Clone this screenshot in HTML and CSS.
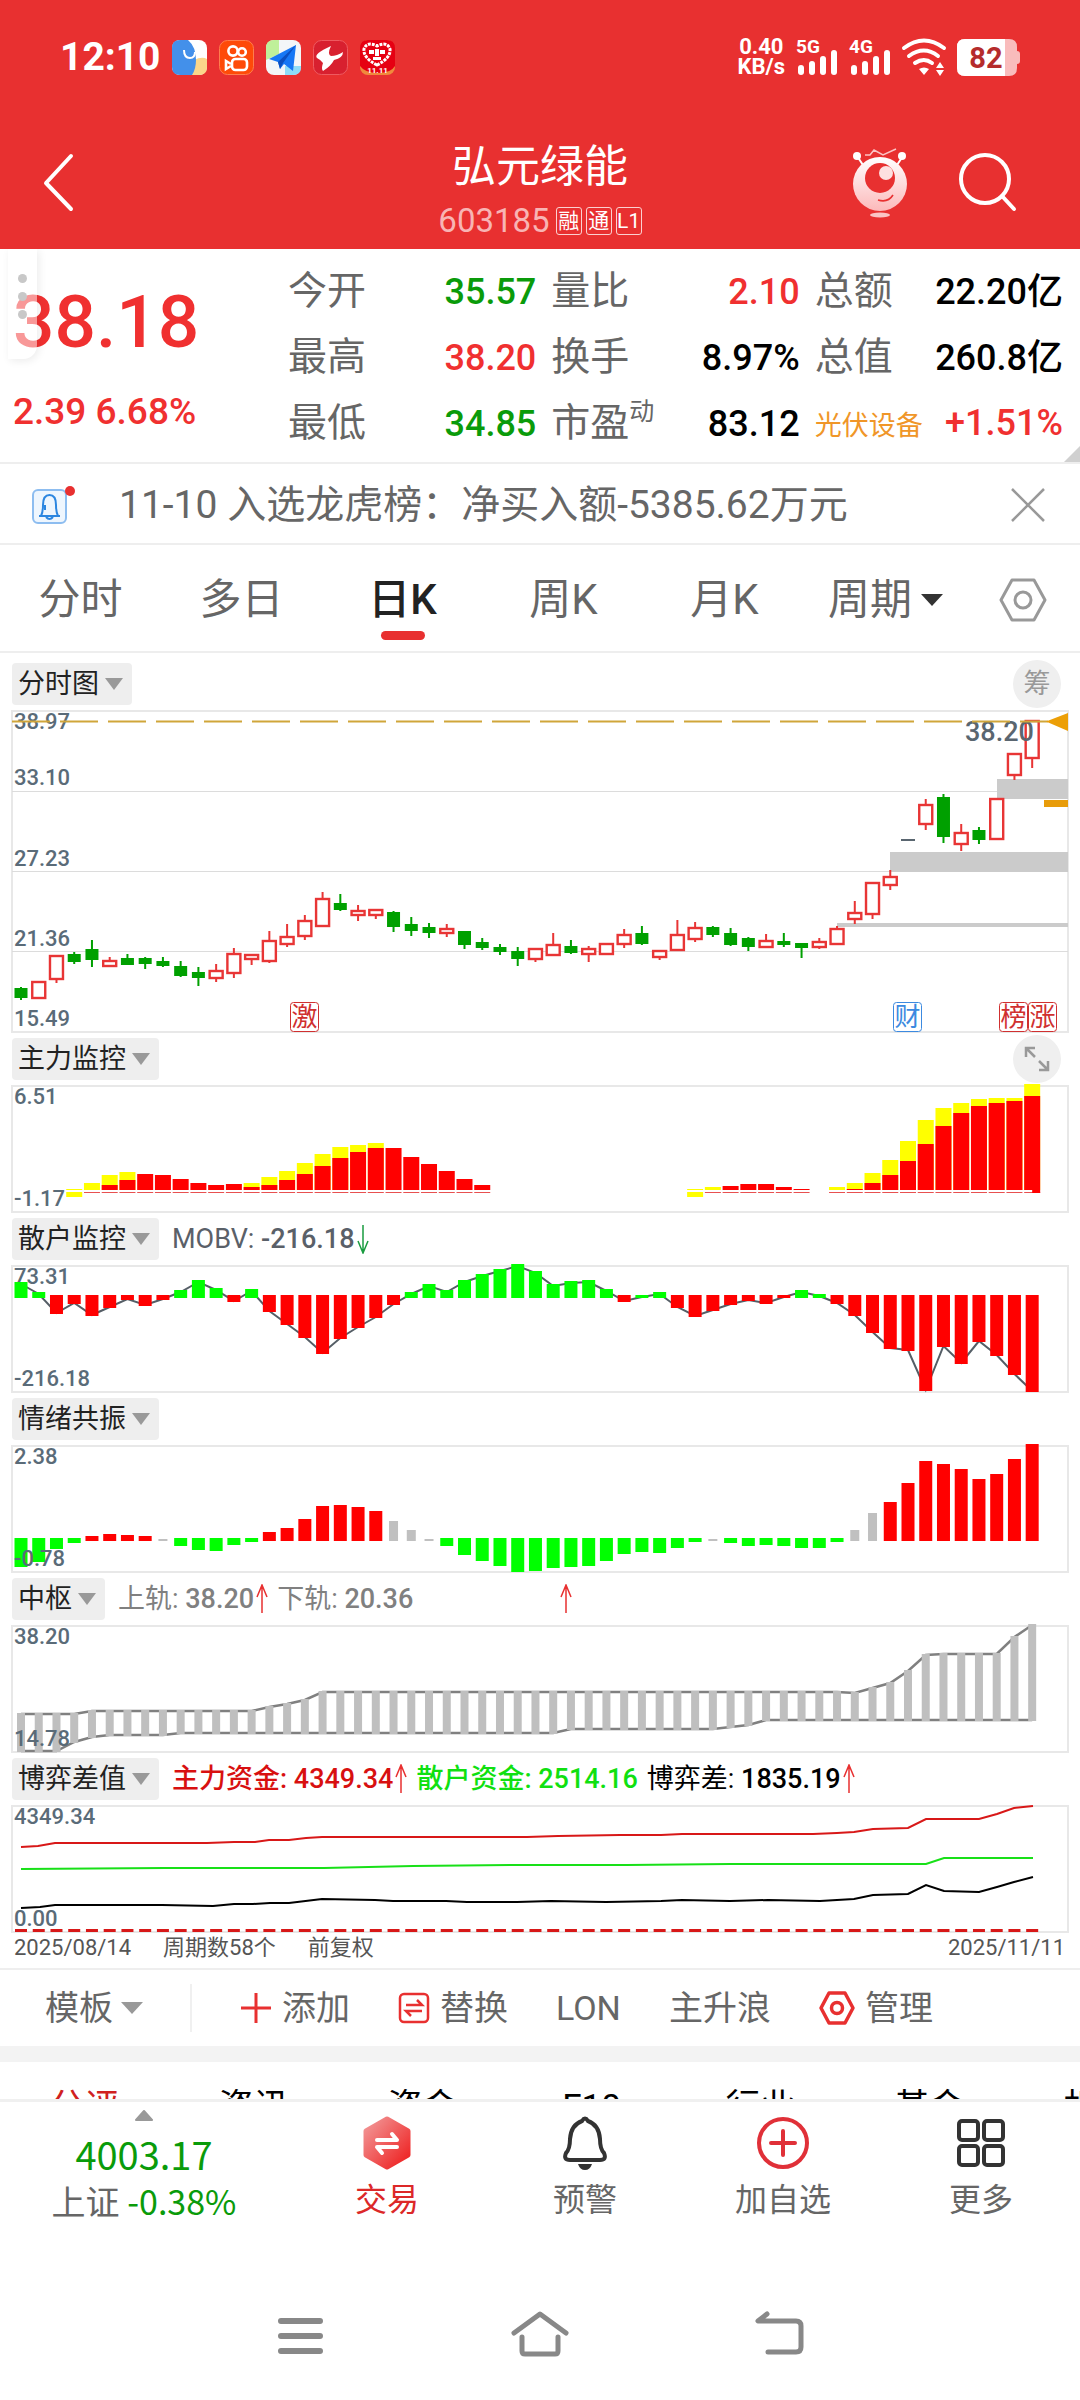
FILE: index.html
```html
<!DOCTYPE html>
<html lang="zh-CN">
<head>
  <meta charset="UTF-8">
  <meta name="viewport" content="width=device-width, initial-scale=1.0">
  <title>弘元绿能 603185</title>
  <link rel="stylesheet" href="styles.css">
</head>
<body>
  <div class="top">
    <div class="status">
      <span class="clock">12:10</span>
      <div class="apps">
        <svg width="35" height="35" viewBox="0 0 35 35"><rect width="35" height="35" rx="8" fill="#fff"/><path d="M22 20q8-4 13-1v8q0 8-8 8h-8z" fill="#fbd68a"/><path d="M8 0h8q8 7 8 20 0 9-4 15H8q-8 0-8-8V8q0-8 8-8z" fill="#4390ea"/><path d="M12 10q0 8 6 8 5 0 5-6" fill="none" stroke="#fff" stroke-width="2"/></svg>
        <svg width="35" height="35" viewBox="0 0 35 35"><rect x=".5" y=".5" width="34" height="34" rx="8" fill="#fe4a08" stroke="#ff7d4d"/><g fill="none" stroke="#fff" stroke-width="2.6"><circle cx="14" cy="11" r="4.6"/><circle cx="23" cy="12" r="3.8"/><rect x="13" y="19" width="15" height="11" rx="3.5"/><path d="M12 24l-5-3v8l5-3"/></g></svg>
        <svg width="35" height="35" viewBox="0 0 35 35"><rect width="35" height="35" rx="8" fill="#f3f6f8"/><path d="M8 0h5v14L0 20V8q0-8 8-8z" fill="#bff09a"/><path d="M19 26h16v1q0 8-8 8h-8z" fill="#8edcf8"/><path d="M30 5L3 19l9 3 2 7 4-5 9 7z" fill="#1677f5"/><path d="M30 5L12 22l2 7 3-6z" fill="#0b4fc0"/></svg>
        <svg width="35" height="35" viewBox="0 0 35 35"><rect x=".5" y=".5" width="34" height="34" rx="8" fill="#d8202f" stroke="#ee5a60"/><path d="M18 6Q0 14 4 18q4 2 6 5-2 6 0 8 8-5 11-11Q30 18 30 12q-6 4-12 4-4-2 0-10z" fill="#fff"/></svg>
        <svg width="35" height="35" viewBox="0 0 35 35"><rect width="35" height="35" rx="8" fill="#f08a3c"/><path d="M8 0h19q8 0 8 8v18q-4 7-17 7T0 26V8q0-8 8-8z" fill="#e60012"/><path d="M17 25Q3 18 4 9q3-8 13-3 10-5 13 3 1 9-13 16z" fill="none" stroke="#fff" stroke-width="3" stroke-dasharray="3 1"/><path d="M9 10h5v4H9zM20 10h5v4h-5zM15 9h4v7h-4zM13 17h8v3h-8z" fill="#fff"/><text x="17.5" y="33" class="app-date">11.11</text></svg>
      </div>
      <div class="speed"><span>0.40</span><span>KB/s</span></div>
      <svg width="42" height="38" viewBox="0 0 42 38" fill="#fff"><text x="0" y="15" class="net">5G</text><rect x="2" y="27" width="6" height="10" rx="3"/><rect x="13" y="23" width="6" height="14" rx="3"/><rect x="24" y="18" width="6" height="19" rx="3"/><rect x="35" y="12" width="6" height="25" rx="3"/></svg>
      <svg width="42" height="38" viewBox="0 0 42 38" fill="#fff"><text x="0" y="15" class="net">4G</text><rect x="2" y="27" width="6" height="10" rx="3"/><rect x="13" y="23" width="6" height="14" rx="3"/><rect x="24" y="18" width="6" height="19" rx="3"/><rect x="35" y="12" width="6" height="25" rx="3"/></svg>
      <svg width="44" height="38" viewBox="0 0 44 38"><g fill="none" stroke="#fff" stroke-width="4" stroke-linecap="round"><path d="M2 10q20-15 40 0"/><path d="M7 18q15-11 29 0"/><path d="M13 25q9-6 17 0"/></g><path d="M17 31q5-3 10 0l-5 6zM34 30l4-6 4 6zM34 32h8l-4 6z" fill="#fff"/></svg>
      <svg width="63" height="37" viewBox="0 0 63 37"><path d="M8 0h44q8 0 8 8v4q3 0 3 3v7q0 3-3 3v4q0 8-8 8H8q-8 0-8-8V8q0-8 8-8z" fill="#f9bcbc"/><path d="M8 0h40v37H8q-8 0-8-8V8q0-8 8-8z" fill="#fff"/><text x="29" y="29" class="battery">82</text></svg>
    </div>
    <header class="header">
      <button class="icon-btn back" aria-label="返回"><svg width="32" height="60" viewBox="0 0 32 60"><path d="M29 4L4 31l25 26" fill="none" stroke="#fff" stroke-width="4" stroke-linecap="round" stroke-linejoin="round"/></svg></button>
      <div class="title">
        <h1>弘元绿能</h1>
        <p><span class="code">603185</span><i>融</i><i>通</i><i>L1</i></p>
      </div>
      <div class="header-actions">
        <button class="icon-btn" aria-label="助手"><svg width="56" height="72" viewBox="0 0 56 72">
          <defs><linearGradient id="ball" x1="0" y1="0" x2="0" y2="1"><stop offset="0" stop-color="#fff"/><stop offset="1" stop-color="#fcb9ba"/></linearGradient></defs>
          <path d="M5 10l6 9M51 10l-6 9" stroke="#fff" stroke-width="2"/><circle cx="5" cy="10" r="4" fill="#fff"/><circle cx="50" cy="10" r="4" fill="#fff"/>
          <path d="M13 9h5l4-5 9 5 13-6" fill="none" stroke="#fbc4c4" stroke-width="1.5"/>
          <circle cx="28" cy="38" r="27" fill="url(#ball)"/><circle cx="28" cy="32" r="15" fill="#e83030"/><circle cx="34" cy="27" r="7" fill="#fde0e0"/>
          <path d="M26 54q10 3 15-5" fill="none" stroke="#e83030" stroke-width="1.6"/><ellipse cx="28" cy="69" rx="10" ry="2.5" fill="#fbc4c4"/></svg></button>
        <button class="icon-btn" aria-label="搜索"><svg width="58" height="60" viewBox="0 0 58 60" fill="none" stroke="#fff" stroke-width="4" stroke-linecap="round"><circle cx="26" cy="27" r="24"/><path d="M43 44l12 13"/></svg></button>
      </div>
    </header>
  </div>

  <main class="main">
    <section class="quote">
      <div class="float-handle"><b></b><b></b><b></b></div>
      <div class="price">
        <strong>38.18</strong>
        <span>2.39 6.68%</span>
      </div>
      <dl class="stats">
        <div><dt>今开</dt><dd class="green">35.57</dd></div>
        <div><dt>量比</dt><dd class="red">2.10</dd></div>
        <div><dt>总额</dt><dd>22.20亿</dd></div>
        <div><dt>最高</dt><dd class="red">38.20</dd></div>
        <div><dt>换手</dt><dd>8.97%</dd></div>
        <div><dt>总值</dt><dd>260.8亿</dd></div>
        <div><dt>最低</dt><dd class="green">34.85</dd></div>
        <div><dt>市盈<sup>动</sup></dt><dd>83.12</dd></div>
        <div><dt class="sector">光伏设备</dt><dd class="red">+1.51%</dd></div>
      </dl>
    </section>

    <section class="news">
      <svg width="44" height="40" viewBox="0 0 44 40"><rect x="1" y="5" width="33" height="33" rx="5" fill="#eef6fe" stroke="#8dbdf0" stroke-width="2"/><path d="M7 31h21M9 31q2-4 2-11 0-10 6.500-10T24 20q0 7 2 11M14 32q3.500 4 7 0M13 20v5" fill="none" stroke="#2c86e0" stroke-width="2"/><circle cx="38" cy="6" r="5" fill="#e83030"/></svg>
      <a href="#news">11-10 入选龙虎榜：净买入额-5385.62万元</a>
      <button class="icon-btn" aria-label="关闭"><svg width="36" height="36" viewBox="0 0 36 36"><path d="M2 2l32 32M34 2L2 34" stroke="#999" stroke-width="2.500"/></svg></button>
    </section>

    <nav class="periods">
      <button>分时</button>
      <button>多日</button>
      <button class="active">日K</button>
      <button>周K</button>
      <button>月K</button>
      <label class="picker"><select aria-label="周期"><option>周期</option></select></label>
      <button class="icon-btn" aria-label="设置"><svg width="50" height="46" viewBox="0 0 50 46" fill="none" stroke="#999" stroke-width="3" stroke-linejoin="round"><path d="M14 3h22l11 20-11 20H14L3 23z"/><circle cx="25" cy="23" r="8"/></svg></button>
    </nav>

    <section class="charts">
      <div class="panel">
        <div class="panel-head">
          <label class="picker tag"><select aria-label="主图"><option>分时图</option></select></label>
          <button class="round">筹</button>
        </div>
        <svg id="kline" viewBox="0 0 1056 321"></svg>
      </div>
      <div class="panel">
        <div class="panel-head">
          <label class="picker tag"><select aria-label="副图一"><option>主力监控</option></select></label>
          <button class="round" aria-label="全屏"><svg width="26" height="26" viewBox="0 0 26 26" fill="none" stroke="#999" stroke-width="2.500"><path d="M2 11V2h9M2 2l9 9M24 15v9h-9M24 24l-9-9"/></svg></button>
        </div>
        <svg id="mainforce" viewBox="0 0 1056 126"></svg>
      </div>
      <div class="panel">
        <div class="panel-head">
          <label class="picker tag"><select aria-label="副图二"><option>散户监控</option></select></label>
          <span class="slate">MOBV: <b>-216.18</b></span><svg class="arrow down"><use href="#arrow"/></svg>
        </div>
        <svg id="retail" viewBox="0 0 1056 126"></svg>
      </div>
      <div class="panel">
        <div class="panel-head">
          <label class="picker tag"><select aria-label="副图三"><option>情绪共振</option></select></label>
        </div>
        <svg id="mood" viewBox="0 0 1056 126"></svg>
      </div>
      <div class="panel">
        <div class="panel-head">
          <label class="picker tag"><select aria-label="副图四"><option>中枢</option></select></label>
          <span class="gray">上轨: <b>38.20</b></span><svg class="arrow"><use href="#arrow"/></svg>
          <span class="gray next">下轨: <b>20.36</b></span><svg class="arrow apart"><use href="#arrow"/></svg>
        </div>
        <svg id="pivot" viewBox="0 0 1056 126"></svg>
      </div>
      <div class="panel">
        <div class="panel-head">
          <label class="picker tag"><select aria-label="副图五"><option>博弈差值</option></select></label>
          <span class="main-fund">主力资金: 4349.34</span><svg class="arrow"><use href="#arrow"/></svg>
          <span class="retail-fund next">散户资金: 2514.16</span>
          <span class="diff next">博弈差: <b>1835.19</b></span><svg class="arrow"><use href="#arrow"/></svg>
        </div>
        <svg id="game" viewBox="0 0 1056 126"></svg>
      </div>
      <div class="dates"><span>2025/08/14</span><span>周期数58个</span><span>前复权</span><span>2025/11/11</span></div>
    </section>

    <div class="tools">
      <label class="picker"><select aria-label="模板"><option>模板</option></select></label>
      <button><svg width="32" height="32" viewBox="0 0 32 32" stroke="#e83030" stroke-width="3"><path d="M16 1v30M1 16h30"/></svg>添加</button>
      <button><svg width="32" height="32" viewBox="0 0 32 32" fill="none" stroke="#e83030" stroke-width="2.500"><rect x="2" y="2" width="28" height="28" rx="4"/><path d="M8 13h16l-5-5M24 19H8l5 5"/></svg>替换</button>
      <button>LON</button>
      <button>主升浪</button>
      <button><svg width="36" height="36" viewBox="0 0 36 36" fill="none" stroke="#e83030" stroke-width="3.500" stroke-linejoin="round"><path d="M10 3h16l8 15-8 15H10L2 18z"/><circle cx="18" cy="18" r="5.500"/></svg>管理</button>
    </div>

    <nav class="sections">
      <a href="#s1" class="active">分评</a>
      <a href="#s2">资讯</a>
      <a href="#s3">资金</a>
      <a href="#s4">F10</a>
      <a href="#s5">行业</a>
      <a href="#s6">基金</a>
      <a href="#s7">相关</a>
    </nav>
  </main>

  <footer>
    <div class="dock">
      <a href="#index" class="index">
        <svg width="20" height="11" viewBox="0 0 20 11"><path d="M10 1l8 9H2z" fill="#999" stroke="#999" stroke-width="2" stroke-linejoin="round"/></svg>
        <span class="index-value">4003.17</span>
        <span class="index-change">上证 <b>-0.38%</b></span>
      </a>
      <button class="trade"><svg width="54" height="54" viewBox="0 0 54 54">
        <defs><linearGradient id="hex" x1="0" y1="0" x2="1" y2="1"><stop offset="0" stop-color="#f29a9a"/><stop offset="1" stop-color="#ee1c1c"/></linearGradient></defs>
        <path d="M27 3l21 12v24L27 51 6 39V15z" fill="url(#hex)" stroke="url(#hex)" stroke-width="5" stroke-linejoin="round"/>
        <path d="M17 24h20l-5-6M37 31H17l5 6" fill="none" stroke="#fff" stroke-width="4" stroke-linecap="round" stroke-linejoin="round"/></svg>交易</button>
      <button><svg width="54" height="54" viewBox="0 0 54 54"><path d="M24 5q3-5 6 0 11 4 12 18 0 10 4 14 3 7-4 7H12q-7 0-4-7 4-4 4-14Q13 9 24 5z" fill="none" stroke="#333" stroke-width="4"/><path d="M20 48h14q-2 6-7 6t-7-6z" fill="#333"/></svg>预警</button>
      <button><svg width="54" height="54" viewBox="0 0 54 54" fill="none" stroke="#e03038" stroke-width="4" stroke-linecap="round"><circle cx="27" cy="27" r="24"/><path d="M27 15v24M15 27h24"/></svg>加自选</button>
      <button><svg width="54" height="54" viewBox="0 0 54 54" fill="none" stroke="#333" stroke-width="4"><rect x="5" y="5" width="19" height="19" rx="3"/><rect x="30" y="5" width="19" height="19" rx="3"/><rect x="5" y="30" width="19" height="19" rx="3"/><rect x="30" y="30" width="19" height="19" rx="3"/></svg>更多</button>
    </div>
    <div class="sysnav">
      <button class="icon-btn" aria-label="菜单"><svg width="60" height="50" viewBox="0 0 60 50" stroke="#888" stroke-width="6" stroke-linecap="round"><path d="M11 13h39M11 28h39M11 43h39"/></svg></button>
      <button class="icon-btn" aria-label="主页"><svg width="60" height="50" viewBox="0 0 60 50" fill="none" stroke="#888" stroke-width="5" stroke-linecap="round" stroke-linejoin="round"><path d="M4 25L30 6l26 19"/><path d="M12 29v14q0 3 3 3h30q3 0 3-3V29"/></svg></button>
      <button class="icon-btn" aria-label="后退"><svg width="60" height="50" viewBox="0 0 60 50" fill="none" stroke="#888" stroke-width="5" stroke-linecap="round" stroke-linejoin="round"><path d="M17 6l-9 7h38q5 0 5 5v21q0 5-5 5H18"/></svg></button>
    </div>
  </footer>

  <svg class="defs"><symbol id="arrow" viewBox="0 0 12 30"><path d="M6 29V2M1 13L6 1l5 12" fill="none" stroke="currentColor" stroke-width="1.500"/></symbol></svg>
  <script src="charts.js"></script>
</body>
</html>
```
FILE: styles.css
```css
* {
  box-sizing: border-box;
}

body {
  margin: 0;
  height: 100vh;
  display: flex;
  flex-direction: column;
  background: #fff;
  color: #666;
  font-family: Roboto, "Noto Sans CJK SC", sans-serif;
}

h1, p, dl, dd {
  margin: 0;
}

a {
  color: inherit;
  text-decoration: none;
}

button, select {
  margin: 0;
  padding: 0;
  border: 0;
  background: none;
  color: inherit;
  font: inherit;
  line-height: inherit;
  cursor: pointer;
}

svg {
  display: block;
  flex: none;
}

.icon-btn {
  display: flex;
  justify-content: center;
}

.defs {
  position: absolute;
  width: 0;
  height: 0;
}

.red { color: #f03030; }
.green { color: #0a9b0a; }

/* status bar and title */
.top {
  background: #e83030;
  color: #fff;
}

.status {
  display: flex;
  align-items: center;
  gap: 11px;
  height: 114px;
  padding: 0 60px;
}

.status svg {
  overflow: visible;
}

.clock {
  font-size: 39px;
  font-weight: 700;
}

.apps {
  display: flex;
  gap: 12px;
  margin-right: auto;
}

.app-date {
  fill: #fff;
  font-size: 8px;
  font-weight: 700;
  text-anchor: middle;
}

.speed {
  display: flex;
  flex-direction: column;
  align-items: center;
  font-size: 22px;
  font-weight: 700;
  line-height: 20px;
}

.net {
  font-size: 19px;
  font-weight: 700;
}

.battery {
  fill: #b52c2c;
  font-size: 29px;
  font-weight: 700;
  text-anchor: middle;
}

.header {
  display: grid;
  grid-template-columns: 1fr auto 1fr;
  align-items: center;
  padding: 14px 42px 13px;
}

.back {
  justify-self: start;
}

.title {
  padding-top: 12px;
  text-align: center;
}

.title h1 {
  font-size: 44px;
  font-weight: 400;
  line-height: 54px;
}

.title p {
  display: flex;
  align-items: center;
  justify-content: center;
  gap: 4px;
  margin-top: 12px;
}

.code {
  margin-right: 2px;
  color: #f8b4b4;
  font-size: 33px;
  line-height: 30px;
}

.title i {
  width: 26px;
  height: 28px;
  border: 1px solid #fbd0d0;
  border-radius: 3px;
  font-size: 21px;
  font-style: normal;
  line-height: 26px;
}

.header-actions {
  display: flex;
  align-items: center;
  justify-content: flex-end;
  gap: 51px;
  padding-right: 21px;
}

/* everything between title and dock */
.main {
  flex: 1;
  min-height: 0;
  overflow: hidden;
}

.quote {
  position: relative;
  display: flex;
  height: 215px;
  border-bottom: 2px solid #eee;
}

.quote::after {
  content: "";
  position: absolute;
  right: 0;
  bottom: 0;
  width: 16px;
  height: 16px;
  background: #d0d0d0;
  clip-path: polygon(100% 0, 100% 100%, 0 100%);
}

.float-handle {
  position: absolute;
  left: 8px;
  top: 0;
  display: flex;
  flex-direction: column;
  gap: 9px;
  width: 29px;
  height: 110px;
  padding: 25px 10px;
  border-radius: 0 0 14px 0;
  background: rgba(255, 255, 255, 0.5);
  box-shadow: 2px 2px 8px rgba(0, 0, 0, 0.08);
}

.float-handle b {
  width: 9px;
  height: 9px;
  border-radius: 50%;
  background: #c8c8c8;
}

.price {
  width: 290px;
  padding: 37px 0 0 13px;
  color: #f03030;
}

.price strong {
  display: block;
  font-size: 73px;
  font-weight: 500;
  line-height: 72px;
}

.price span {
  display: block;
  margin-top: 32px;
  font-size: 37px;
  font-weight: 500;
  line-height: 44px;
}

.stats {
  flex: 1;
  display: grid;
  grid-template-columns: repeat(3, 1fr);
  grid-auto-rows: 66px;
  column-gap: 15px;
  margin-left: -2px;
  padding: 9px 17px 0 0;
}

.stats div {
  display: flex;
  align-items: baseline;
  justify-content: space-between;
  line-height: 66px;
  white-space: nowrap;
}

.stats dt {
  font-size: 39px;
}

.stats dd {
  color: #000;
  font-size: 36px;
  font-weight: 500;
}

.stats .red { color: #f03030; }
.stats .green { color: #0a9b0a; }

.stats sup {
  font-size: 25px;
  line-height: 0;
  vertical-align: 16px;
}

.stats .sector {
  color: #f09628;
  font-size: 27px;
}

.news {
  display: flex;
  align-items: center;
  height: 81px;
  padding: 2px 34px 0 32px;
  border-bottom: 2px solid #eee;
}

.news a {
  flex: 1;
  margin-left: 43px;
  font-size: 39px;
  line-height: 48px;
}

.periods {
  display: grid;
  grid-template-columns: repeat(6, 1fr) 114px;
  align-items: center;
  height: 108px;
  padding-top: 4px;
  border-bottom: 2px solid #eee;
  font-size: 42px;
  line-height: 60px;
}

.periods .active {
  position: relative;
  color: #222;
  font-weight: 500;
}

.periods .active::after {
  content: "";
  position: absolute;
  left: 50%;
  bottom: -10px;
  width: 44px;
  height: 9px;
  margin-left: -22px;
  border-radius: 5px;
  background: #e83030;
}

/* drop-downs */
.picker {
  display: flex;
  align-items: center;
  justify-content: center;
  gap: 8px;
}

.picker select {
  appearance: none;
}

.picker::after {
  content: "";
  width: 22px;
  height: 12px;
  background: #333;
  clip-path: polygon(0 0, 100% 0, 50% 100%);
}

.tag {
  height: 42px;
  gap: 6px;
  margin-right: 13px;
  padding: 0 9px 0 6px;
  border-radius: 4px;
  background: #eee;
  color: #222;
}

.tag::after {
  width: 18px;
  background: #999;
}

/* charts */
.charts {
  padding: 10px 12px 0;
  border-bottom: 2px solid #eee;
}

.panel {
  margin-bottom: 6px;
}

.panel > svg {
  width: 100%;
  overflow: visible;
}

.panel-head {
  position: relative;
  display: flex;
  align-items: center;
  height: 42px;
  margin-bottom: 6px;
  font-size: 27px;
  line-height: 42px;
  white-space: nowrap;
}

.panel-head b {
  font-weight: 500;
}

.round {
  position: absolute;
  right: 7px;
  top: -3px;
  display: flex;
  align-items: center;
  justify-content: center;
  width: 48px;
  height: 48px;
  border-radius: 50%;
  background: #efefef;
  color: #999;
}

.arrow {
  width: 12px;
  height: 30px;
  margin-left: 2px;
  color: #e83030;
}

.arrow.down {
  color: #1a9c40;
  transform: rotate(180deg);
}

.arrow.apart {
  margin-left: 147px;
}

.next { margin-left: 9px; }
.slate { color: #5a6068; }
.gray { color: #808080; }
.main-fund { color: #d81010; font-weight: 500; }
.retail-fund { color: #10e010; font-weight: 500; }
.diff { color: #000; }

.axis {
  fill: #5a6b78;
  font-size: 22px;
  font-weight: 500;
}

.peak {
  fill: #5a6670;
  font-size: 27px;
  font-weight: 500;
}

.mark {
  font-size: 26px;
  text-anchor: middle;
}

.dates {
  display: flex;
  gap: 32px;
  margin-top: -3px;
  padding: 0 3px 7px 2px;
  color: #555;
  font-size: 22px;
  line-height: 26px;
}

.dates span:last-child {
  margin-left: auto;
}

.tools {
  display: flex;
  align-items: center;
  gap: 48px;
  height: 92px;
  padding: 0 45px;
  border-bottom: 16px solid #f3f3f3;
  font-size: 34px;
  line-height: 48px;
}

.tools button {
  display: flex;
  align-items: center;
  gap: 10px;
}

.tools .picker {
  padding-right: 47px;
  border-right: 2px solid #f0f0f0;
}

.tools .picker::after {
  background: #999;
}

.sections {
  display: grid;
  grid-template-columns: repeat(7, 169px);
  padding-top: 20px;
  color: #000;
  font-size: 35px;
  line-height: 52px;
  text-align: center;
}

.sections .active {
  color: #d02020;
}

/* bottom dock */
.dock {
  display: grid;
  grid-template-columns: 288px repeat(4, 1fr);
  padding-top: 8px;
  border-top: 3px solid #f0f0f0;
  font-size: 32px;
  line-height: 40px;
}

.dock a, .dock button {
  display: flex;
  flex-direction: column;
  align-items: center;
}

.dock button {
  gap: 10px;
  padding-top: 6px;
}

.dock .trade {
  color: #dc2828;
}

.index {
  font-family: "Noto Sans CJK SC", sans-serif;
}

.index-value {
  margin: 10px 0 4px;
  color: #0a9b0a;
  font-size: 38px;
  line-height: 46px;
}

.index-change {
  font-size: 34px;
}

.index-change b {
  color: #0a9b0a;
  font-weight: 400;
}

.sysnav {
  display: grid;
  grid-template-columns: repeat(3, 240px);
  justify-content: center;
  padding: 87px 0 42px;
}
```
FILE: charts.js
```js
const STEP = 17.74;
const W = 1056;
const x = i => 9 + STEP * i;

const rect = (x, y, w, h, fill) => `<rect x="${x}" y="${y}" width="${w}" height="${h}" fill="${fill}"/>`;
const line = (pts, color, w) => `<polyline points="${pts.map(p => p.join()).join(' ')}" fill="none" stroke="${color}" stroke-width="${w}"/>`;
const axis = (y, s) => `<text class="axis" x="2" y="${y}">${s}</text>`;
const frame = h => `<rect x="0" y="0" width="${W}" height="${h}" fill="none" stroke="#e8e8e8" stroke-width="2"/>`;
const put = (id, s) => { document.getElementById(id).innerHTML = s; };

// candles: [up, high, body top, body bottom, low]
const candles = [
  [0,276,278,286,289],[1,271,271,287,287],[1,245,245,268,272],[0,241,244,250,253],[0,229,239,248,256],
  [1,246,250,255,255],[0,243,248,253,254],[0,246,248,252,258],[0,246,251,254,256],[0,250,256,264,266],
  [0,256,262,266,275],[1,253,260,267,271],[1,237,243,262,267],[1,244,244,248,254],[1,220,230,250,252],
  [1,213,226,233,236],[1,204,210,225,229],[1,181,188,215,215],[0,183,193,198,200],[1,194,200,204,210],
  [1,199,199,204,208],[0,200,202,215,221],[0,206,214,219,225],[0,212,217,221,227],[1,213,218,222,226],
  [0,220,221,233,238],[0,227,232,236,239],[0,233,237,240,244],[0,236,241,247,255],[1,238,238,248,251],
  [1,222,234,244,244],[0,229,236,241,243],[1,235,238,243,251],[1,232,233,243,244],[1,218,224,233,237],
  [0,215,223,232,234],[1,240,240,246,249],[1,209,224,239,239],[1,211,217,228,231],[0,215,217,223,226],
  [0,217,223,233,235],[0,226,228,235,240],[1,223,230,236,236],[0,222,231,233,236],[0,232,233,236,247],
  [1,227,231,236,238],[1,215,218,233,233],[1,190,202,208,213],[1,172,172,203,208],[1,159,166,174,179],
  null,[1,88,94,113,119],[0,83,87,125,132],[1,113,122,133,140],[0,116,120,128,133],
  [1,88,88,128,128],[1,43,43,64,69],[1,10,10,47,57]
];

function drawKline() {
  let s = frame(321);
  [80, 160, 240].forEach(y => { s += rect(0, y, W, 1, '#dcdcdc'); });
  s += rect(985, 68, 71, 20, '#cbcbcb') + rect(878, 141, 178, 20, '#cbcbcb') + rect(825, 212, 231, 4, '#cbcbcb');
  s += rect(1032, 89, 24, 7, '#e89c0a');
  s += axis(18, '38.97') + axis(74, '33.10') + axis(155, '27.23') + axis(235, '21.36') + axis(315, '15.49');
  candles.forEach((c, i) => {
    if (!c) {
      s += rect(x(i) - 7, 128, 14, 2, '#5a6670');
      return;
    }
    const [up, hi, top, bot, lo] = c;
    const color = up ? '#e83535' : '#00a000';
    s += rect(x(i) - 1, hi, 2, Math.max(top - hi, 0), color) + rect(x(i) - 1, bot, 2, lo - bot, color);
    s += up
      ? `<rect x="${x(i) - 6.5}" y="${top}" width="13" height="${bot - top}" fill="#fff" stroke="${color}" stroke-width="2.4"/>`
      : rect(x(i) - 6.5, top - 1, 13, bot - top + 2, color);
  });
  s += `<text class="peak" x="953" y="30">38.20</text>`;
  s += `<path d="M0 10.500H1036" stroke="#d0a63a" stroke-width="2" stroke-dasharray="38 10"/><path d="M1034 10.500L1056 2V20z" fill="#ec9f07"/>`;
  [[278, '激', '#d03030'], [881, '财', '#3c8ae0'], [987, '榜', '#d03030'], [1016, '涨', '#d03030']].forEach(([bx, t, c]) => {
    s += `<rect x="${bx + 0.5}" y="291.5" width="28" height="29" rx="3" fill="#fff" stroke="${c}"/><text class="mark" x="${bx + 14.5}" y="315" fill="${c}">${t}</text>`;
  });
  put('kline', s);
}

// index: [yellow height, red height]
const force = {
  3: [1,0], 4: [7,0], 5: [15,5], 6: [18,10], 7: [0,16], 8: [0,15], 9: [0,11], 10: [0,7], 11: [0,5], 12: [0,6],
  13: [7,3], 14: [13,5], 15: [19,10], 16: [27,16], 17: [36,24], 18: [43,32], 19: [45,38], 20: [47,42],
  21: [0,42], 22: [0,33], 23: [0,26], 24: [0,19], 25: [0,11], 26: [0,5],
  38: [1,0], 39: [3,0], 40: [0,4], 41: [0,6], 42: [0,6], 43: [0,3], 44: [0,1],
  46: [3,0], 47: [7,1], 48: [17,7], 49: [30,15], 50: [49,29], 51: [70,46], 52: [82,64], 53: [87,77],
  54: [91,84], 55: [92,87], 56: [92,89], 57: [106,94]
};

function drawForce() {
  let s = frame(126) + axis(18, '6.51') + axis(120, '-1.17');
  Object.entries(force).forEach(([i, [y, r]]) => {
    const left = x(+i) - 8;
    if (y) s += rect(left, 104 - y, 16, y, '#ff0');
    if (r) s += rect(left, 104 - r, 16, r, '#f00');
    if (y === 1) s += rect(left, 106, 16, 5, '#ff0');
    else s += rect(left, 106, 16, 1, '#e85050');
  });
  s += rect(x(57), 104, 8, 3, '#f00');
  put('mainforce', s);
}

const retail = [
  16,26,48,38,50,42,34,40,34,24,14,22,36,23,46,59,72,88,73,62,52,39,26,18,24,14,8,3,-2,5,
  18,15,14,23,36,29,26,42,51,45,39,35,38,32,24,28,38,50,67,83,85,125,81,98,76,90,109,126
];

function drawRetail() {
  let s = frame(126) + axis(18, '73.31') + axis(120, '-216.18');
  s += line(retail.map((v, i) => [x(i), v < 30 ? v + 2 : v - 1]), '#555e66', 2);
  retail.forEach((v, i) => {
    s += v < 30 ? rect(x(i) - 6.5, v, 13, 32 - v, '#0f0') : rect(x(i) - 6.5, 29, 13, v - 29, '#f00');
  });
  put('retail', s);
}

const mood = [
  121,116,103,97,90,88,89,90,93,100,104,105,99,96,86,82,73,60,59,61,65,75,84,93,100,109,115,120,126,125,
  122,121,120,115,108,106,107,102,96,93,97,100,99,100,102,102,96,84,67,56,37,15,18,23,33,28,13,-2
];
const flat = [8, 21, 22, 23, 39, 47, 48];

function drawMood() {
  let s = frame(126) + axis(18, '2.38');
  mood.forEach((v, i) => {
    if (flat.includes(i)) s += rect(x(i) - 4.5, v, 9, 95 - v, '#c0c0c0');
    else if (v > 95) s += rect(x(i) - 6.5, 92, 13, v - 92, '#0f0');
    else s += rect(x(i) - 6.5, v, 13, 95 - v, '#f00');
  });
  put('mood', s + axis(120, '-0.78'));
}

// [from index, value], held until the next entry
const upper = [[0,88],[4,85],[14,81],[15,78],[16,74],[17,66],[47,67],[48,62],[49,57],[50,45],[51,29],[52,28],[56,11],[57,-1]];
const lower = [[0,125],[3,116],[4,111],[5,109],[9,107],[31,103],[40,101],[41,99],[42,94]];
const at = (steps, i) => steps.filter(p => p[0] <= i).pop()[1];

function drawPivot() {
  const idx = [...Array(58).keys()];
  let s = frame(126) + axis(18, '38.20');
  s += line(idx.map(i => [x(i), at(upper, i)]), '#808080', 2.5) + line(idx.map(i => [x(i), at(lower, i)]), '#808080', 2.5);
  idx.forEach(i => { s += rect(x(i) - 4, at(upper, i) - 1, 8, at(lower, i) - at(upper, i) + 2, '#bfbfbf'); });
  put('pivot', s + axis(120, '14.78'));
}

function drawGame() {
  let s = frame(126) + axis(18, '4349.34') + axis(120, '0.00');
  s += line([[9,41],[26,40],[43,37],[195,37],[222,36],[243,36],[257,34],[277,34],[294,32],[310,31],[515,31],[546,30],[608,29],[649,29],[670,28],[801,28],[825,27],[842,26],[861,23],[896,22],[914,13],[967,13],[985,8],[1002,2],[1021,0]], '#d81818', 2);
  s += line([[9,63],[153,62],[312,62],[401,60],[505,59],[615,59],[718,58],[914,58],[932,52],[1021,52]], '#18e018', 2);
  s += line([[9,102],[28,101],[43,99],[150,99],[201,100],[222,98],[241,98],[258,97],[277,97],[310,93],[363,94],[381,95],[434,95],[455,96],[505,96],[539,95],[594,96],[649,95],[670,94],[718,95],[756,94],[808,95],[842,93],[861,89],[896,88],[914,79],[932,85],[967,86],[985,81],[1002,76],[1021,71]], '#000', 2);
  s += `<path d="M3 124.500H1027" stroke="#d81818" stroke-width="3" stroke-dasharray="12 5.740"/>`;
  put('game', s);
}

drawKline();
drawForce();
drawRetail();
drawMood();
drawPivot();
drawGame();
```
